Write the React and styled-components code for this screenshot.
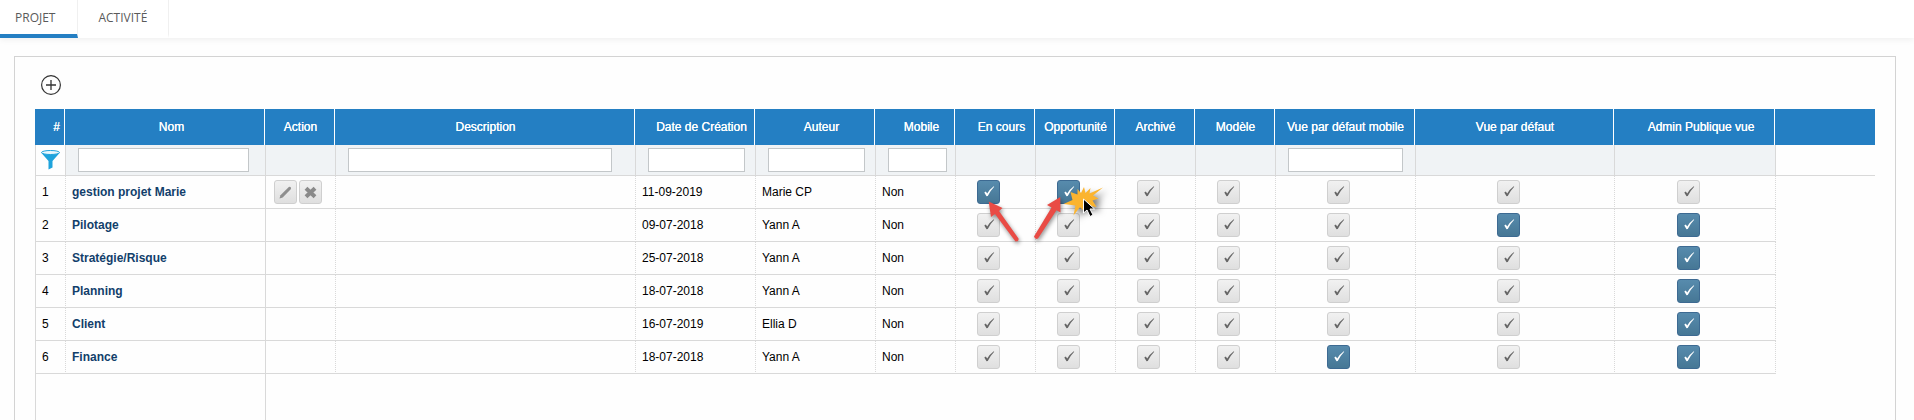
import React, { useState } from "react";
import styled, { createGlobalStyle, css } from "styled-components";

const blue = "#247fc3";
const line = "#d9d9d9";

const GlobalStyle = createGlobalStyle`
  *, *::before, *::after { box-sizing: border-box; }
  body {
    margin: 0;
    background: #fefefe;
    color: #000;
    font: 12px/16px "Liberation Sans", Arial, sans-serif;
  }
`;

const Page = styled.div`
  min-height: 100vh;
  display: flex;
  flex-direction: column;
`;

const TabBar = styled.nav`
  display: flex;
  height: 38px;
  background: #fff;
  box-shadow: 0 2px 6px rgba(0, 0, 0, 0.06);
`;

const Tab = styled.a`
  display: flex;
  align-items: center;
  padding: ${(p) => (p.$active ? "2px 22px 0 15px" : "2px 21px 0 20px")};
  border-right: 1px solid #f0f0f0;
  border-bottom: 4px solid ${(p) => (p.$active ? blue : "transparent")};
  color: #5a5a5a;
  font: 12px/16px "Open Sans", sans-serif;
  text-decoration: none;
`;

const Panel = styled.main`
  flex: 1;
  display: flex;
  flex-direction: column;
  margin: 18px 18px 0 14px;
  padding: 18px 20px 0;
  border: 1px solid #d3d3d3;
  border-bottom: 0;
`;

const AddButton = styled.button`
  width: 20px;
  height: 20px;
  margin: 0 0 14px 6px;
  padding: 0;
  border: 0;
  background: none;
  cursor: pointer;
  svg { display: block; }
`;

const Grid = styled.table`
  width: 100%;
  table-layout: fixed;
  border-collapse: separate;
  border-spacing: 0;
`;

const HeadCell = styled.th`
  height: 36px;
  padding: 0 0 0 ${(p) => (p.$sortable ? "14px" : "2px")};
  border-right: ${(p) => (p.$last ? "0" : "1px solid #fff")};
  background: ${blue};
  color: #fff;
  font-weight: normal;
  text-align: center;
  text-shadow: 0 0 0 #fff;
  white-space: nowrap;
`;

const FilterCell = styled.td`
  height: 31px;
  padding: 0 0 0 ${(p) => (p.$icon ? "5px" : "12px")};
  border-left: 1px solid ${line};
  border-bottom: 1px solid ${line};
  background: ${(p) => (p.$plain ? "#fefefe" : "#f0f3f5")};
  svg, input { display: block; }
`;

const FilterInput = styled.input`
  width: ${(p) => p.$width}px;
  height: 24px;
  padding: 0 4px;
  border: 1px solid #c3c7c9;
  background: #fff;
  font: inherit;
`;

const Cell = styled.td`
  height: 33px;
  padding: 0 0 0 6px;
  border-left: 1px ${(p) => (p.$solid ? "solid" : "dotted")} ${line};
  border-bottom: ${(p) => (p.$open ? "0" : `1px solid ${line}`)};
  ${(p) =>
    p.$check &&
    css`
      padding: 0 14px 0 0;
      text-align: center;
    `}
`;

const NameLink = styled.a`
  color: #123f6b;
  font-weight: bold;
  text-decoration: none;
`;

const Actions = styled.div`
  display: flex;
  gap: 2px;
  padding-left: 2px;
`;

const face = css`
  width: 23px;
  height: 24px;
  margin: 0;
  border: 1px solid #cfcfcf;
  border-radius: 3px;
  background: linear-gradient(#f1f1f1, #dfdfdf);
`;

const IconButton = styled.button`
  ${face}
  display: grid;
  place-items: center;
  padding: 0;
  cursor: pointer;
`;

const CheckWrap = styled.span`
  position: relative;
  display: inline-grid;
  vertical-align: top;
  > input, > svg { grid-area: 1 / 1; }
  > svg { pointer-events: none; fill: #666; }
  > input:checked + svg { fill: #fff; }
`;

const CheckInput = styled.input`
  ${face}
  appearance: none;
  cursor: pointer;
  &:checked {
    border-color: #3d6a92;
    background: linear-gradient(#578bad, #467795);
  }
`;

const Callout = styled.span`
  position: absolute;
  z-index: 1;
  top: 0;
  left: ${(p) => p.$left}px;
  pointer-events: none;
  svg { display: block; overflow: visible; }
`;

const Arrow = styled.path`
  fill: #e94b45;
  filter: drop-shadow(1px 2px 2px rgba(0, 0, 0, 0.45));
`;

const Burst = styled.path`
  fill: #fbb42f;
  filter: drop-shadow(4px 4px 3px rgba(0, 0, 0, 0.5));
`;

const Tail = styled.div`
  flex: 1;
  min-height: 46px;
  display: grid;
  grid-template-columns: 230px 1fr;
  > div { border-left: 1px solid ${line}; }
`;

const columns = [
  { key: "id", label: "#", width: 30, sortable: true },
  { key: "name", label: "Nom", width: 200, sortable: true, filter: 171 },
  { key: "action", label: "Action", width: 70 },
  { key: "description", label: "Description", width: 300, filter: 264 },
  { key: "created", label: "Date de Création", width: 120, sortable: true, filter: 97 },
  { key: "author", label: "Auteur", width: 120, sortable: true, filter: 97 },
  { key: "mobile", label: "Mobile", width: 80, sortable: true, filter: 59 },
  { key: "current", label: "En cours", width: 80, sortable: true, check: true },
  { key: "opportunity", label: "Opportunité", width: 80, check: true },
  { key: "archived", label: "Archivé", width: 80, check: true },
  { key: "model", label: "Modèle", width: 80, check: true },
  { key: "mobileView", label: "Vue par défaut mobile", width: 140, check: true, filter: 115 },
  { key: "defaultView", label: "Vue par défaut", width: 199, check: true },
  { key: "publicAdmin", label: "Admin Publique vue", width: 161, sortable: true, check: true },
];

const projects = [
  { id: 1, name: "gestion projet Marie", created: "11-09-2019", author: "Marie CP", mobile: "Non", on: ["current", "opportunity"], editable: true },
  { id: 2, name: "Pilotage", created: "09-07-2018", author: "Yann A", mobile: "Non", on: ["defaultView", "publicAdmin"] },
  { id: 3, name: "Stratégie/Risque", created: "25-07-2018", author: "Yann A", mobile: "Non", on: ["publicAdmin"] },
  { id: 4, name: "Planning", created: "18-07-2018", author: "Yann A", mobile: "Non", on: ["publicAdmin"] },
  { id: 5, name: "Client", created: "16-07-2019", author: "Ellia D", mobile: "Non", on: ["publicAdmin"] },
  { id: 6, name: "Finance", created: "18-07-2018", author: "Yann A", mobile: "Non", on: ["mobileView", "publicAdmin"] },
];

function CurrentCallout() {
  return (
    <Callout $left={0}>
      <svg width="46" height="66" aria-hidden="true">
        <Arrow d="M11.7 21.5 L25.5 28 L22 31 L41.5 58.5 Q42 61.5 38.5 61.5 L18 34 L14 37 Z" />
      </svg>
    </Callout>
  );
}

function OpportunityCallout() {
  return (
    <Callout $left={-27}>
      <svg width="78" height="66" aria-hidden="true">
        <Arrow d="M30.3 17 L30.5 32.5 L26.5 30.3 L8 58.5 Q5 60 4 56.5 L21.5 27.5 L17 25 Z" />
        <Burst d="M73 7.5 L63 15.5 L68.5 18.5 L62.5 20.5 L66.5 27 L57 25.5 L53 30 L50 27 L43.5 35.5 L45.5 25.5 L33.5 24 L42.5 20 L40.5 12 L47.5 14.5 L47.5 9 L51 13 L54 7 L55.5 13 L60.5 8 L59.5 13.5 Z" />
        <path d="M53.5 19 V33 L57 30 L60 36.5 L63 35 L60 29 L64.5 29 Z" fill="#000" stroke="#fff" />
      </svg>
    </Callout>
  );
}

const callouts = { "1-current": CurrentCallout, "1-opportunity": OpportunityCallout };

function Check({ label, initial, children }) {
  const [on, setOn] = useState(initial);
  return (
    <CheckWrap>
      <CheckInput type="checkbox" aria-label={label} checked={on} onChange={() => setOn(!on)} />
      <svg width="23" height="24" aria-hidden="true">
        <path d="M7.3 12.6 L8.8 11.5 L10.2 13.6 Q12.5 9.5 16.8 6.3 L17.2 6.8 Q13.5 10.6 10.8 16 L9.5 16.2 Z" />
      </svg>
      {children}
    </CheckWrap>
  );
}

function CellContent({ column, row }) {
  if (column.check) {
    const Note = callouts[`${row.id}-${column.key}`];
    return (
      <Check label={`${column.label} – ${row.name}`} initial={row.on.includes(column.key)}>
        {Note && <Note />}
      </Check>
    );
  }
  if (column.key === "name") return <NameLink href="#projet">{row.name}</NameLink>;
  if (column.key === "action")
    return row.editable ? (
      <Actions>
        <IconButton type="button" aria-label="Modifier">
          <svg width="15" height="15" aria-hidden="true">
            <path d="M1.5 13.5 L2.5 10.3 L10.8 2 Q13.3 1.3 13 4 L4.7 12.4 Z" fill="#8e8e8e" />
          </svg>
        </IconButton>
        <IconButton type="button" aria-label="Supprimer">
          <svg width="15" height="15" aria-hidden="true">
            <path d="M3 3.2 L12 11.8 M12 3.2 L3 11.8" stroke="#8a8a8a" strokeWidth="4" />
          </svg>
        </IconButton>
      </Actions>
    ) : null;
  return row[column.key] ?? null;
}

export default function App() {
  return (
    <Page>
      <GlobalStyle />
      <TabBar>
        <Tab href="#projet" $active>PROJET</Tab>
        <Tab href="#activite">ACTIVITÉ</Tab>
      </TabBar>
      <Panel>
        <AddButton type="button" aria-label="Ajouter un projet">
          <svg width="20" height="20" fill="none" stroke="#333" aria-hidden="true">
            <circle cx="10" cy="10" r="9.4" strokeWidth="1.2" />
            <path d="M10 5 V15 M5 10 H15" strokeWidth="1.3" />
          </svg>
        </AddButton>
        <Grid>
          <colgroup>
            {columns.map((c) => <col key={c.key} width={c.width} />)}
            <col />
          </colgroup>
          <thead>
            <tr>
              {columns.map((c) => (
                <HeadCell key={c.key} scope="col" $sortable={c.sortable}>{c.label}</HeadCell>
              ))}
              <HeadCell as="td" $last />
            </tr>
            <tr>
              {columns.map((c) => (
                <FilterCell key={c.key} $plain={c.key === "id"} $icon={c.key === "id"}>
                  {c.key === "id" && (
                    <svg width="20" height="20" aria-hidden="true">
                      <path d="M0 2.5 L7.5 11 V19.5 L11.5 17.5 V11 L19 2.5 Z" fill="#1fa3dc" />
                      <ellipse cx="9.5" cy="2.5" rx="9" ry="2" fill="#e9f7fd" stroke="#1fa3dc" />
                    </svg>
                  )}
                  {c.filter && <FilterInput type="text" aria-label={`Filtrer ${c.label}`} $width={c.filter} />}
                </FilterCell>
              ))}
              <FilterCell $plain />
            </tr>
          </thead>
          <tbody>
            {projects.map((row) => (
              <tr key={row.id}>
                {columns.map((c) => (
                  <Cell key={c.key} $check={c.check} $solid={c.key === "id" || c.key === "action"}>
                    <CellContent column={c} row={row} />
                  </Cell>
                ))}
                <Cell $open />
              </tr>
            ))}
          </tbody>
        </Grid>
        <Tail>
          <div />
          <div />
        </Tail>
      </Panel>
    </Page>
  );
}
